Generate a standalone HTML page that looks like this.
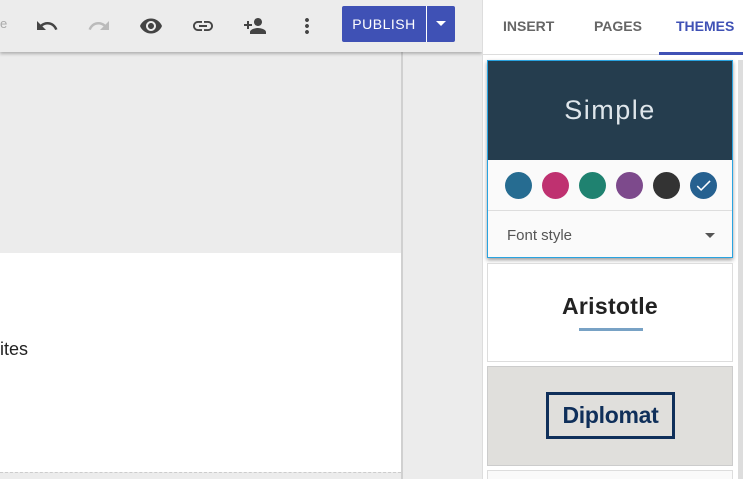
<!DOCTYPE html><html><head><style>
html,body{margin:0;width:743px;height:479px;overflow:hidden}
body{font-family:"Liberation Sans",Roboto,sans-serif;background:#ececec;position:relative}
.a{position:absolute}
.ic{position:absolute;top:14px}
</style></head><body>
<div class="a" style="left:0;top:52px;width:401px;height:201px;background:#ececec"></div>
<div class="a" style="left:0;top:253px;width:401px;height:219px;background:#fff"></div>
<div class="a" style="left:0;top:472px;width:401px;border-top:1px dashed #ccc"></div>
<div class="a" style="left:0;top:339px;font-size:18px;color:#222">ites</div>
<div class="a" style="left:401px;top:52px;width:2px;height:427px;background:#d0d0d0"></div>
<div class="a" style="left:0;top:0;width:482px;height:52px;background:#ececec;box-shadow:0 2px 3px rgba(0,0,0,.25)"></div>
<div class="a" style="left:0;top:16px;font-size:13px;color:#aaa">e</div>
<svg class="ic" style="left:35px" width="24" height="24" viewBox="0 0 24 24"><path fill="#444" d="M12.5 8c-2.650 0-5.050.99-6.900 2.600L2 7v9h9l-3.620-3.620c1.390-1.160 3.160-1.880 5.120-1.880 3.540 0 6.550 2.310 7.600 5.500l2.370-.78C21.080 11.030 17.150 8 12.500 8z"/></svg>
<svg class="ic" style="left:87px" width="24" height="24" viewBox="0 0 24 24"><path fill="#bbb" d="M18.4 10.6C16.55 8.99 14.15 8 11.5 8c-4.65 0-8.58 3.03-9.96 7.22L3.9 16c1.05-3.19 4.05-5.5 7.6-5.5 1.95 0 3.73.72 5.12 1.88L13 16h9V7z"/></svg>
<svg class="ic" style="left:139px" width="24" height="24" viewBox="0 0 24 24"><path fill="#444" d="M12 4.5C7 4.5 2.73 7.61 1 12c1.73 4.39 6 7.5 11 7.5s9.27-3.11 11-7.5c-1.730-4.390-6-7.500-11-7.500zM12 17c-2.76 0-5-2.24-5-5s2.24-5 5-5 5 2.24 5 5-2.24 5-5 5zm0-8c-1.66 0-3 1.34-3 3s1.34 3 3 3 3-1.34 3-3-1.34-3-3-3z"/></svg>
<svg class="ic" style="left:191px" width="24" height="24" viewBox="0 0 24 24"><path fill="#444" d="M3.9 12c0-1.71 1.39-3.1 3.1-3.1h4V7H7c-2.76 0-5 2.24-5 5s2.24 5 5 5h4v-1.9H7c-1.71 0-3.1-1.39-3.1-3.1zM8 13h8v-2H8v2zm9-6h-4v1.9h4c1.71 0 3.1 1.39 3.1 3.1s-1.39 3.1-3.1 3.1h-4V17h4c2.76 0 5-2.24 5-5s-2.24-5-5-5z"/></svg>
<svg class="ic" style="left:243px" width="24" height="24" viewBox="0 0 24 24"><path fill="#444" d="M15 12c2.21 0 4-1.79 4-4s-1.79-4-4-4-4 1.79-4 4 1.79 4 4 4zm-9-2V7H4v3H1v2h3v3h2v-3h3v-2H6zm9 4c-2.67 0-8 1.34-8 4v2h16v-2c0-2.66-5.33-4-8-4z"/></svg>
<svg class="ic" style="left:295px" width="24" height="24" viewBox="0 0 24 24"><path fill="#444" d="M12 8c1.1 0 2-.9 2-2s-.9-2-2-2-2 .9-2 2 .9 2 2 2zm0 2c-1.1 0-2 .9-2 2s.9 2 2 2 2-.9 2-2-.9-2-2-2zm0 6c-1.1 0-2 .9-2 2s.9 2 2 2 2-.9 2-2-.9-2-2-2z"/></svg>
<div class="a" style="left:342px;top:6px;width:113px;height:36px;background:#3f51b5;border-radius:2px"></div>
<div class="a" style="left:342px;top:6px;width:84px;height:36px;line-height:36px;text-align:center;color:#fff;font-size:14px;letter-spacing:.5px">PUBLISH</div>
<div class="a" style="left:426px;top:6px;width:1px;height:36px;background:#fff"></div>
<div class="a" style="left:436px;top:21px;border-left:5px solid transparent;border-right:5px solid transparent;border-top:5px solid #fff"></div>
<div class="a" style="left:482px;top:0;width:261px;height:479px;background:#fff;border-left:1px solid #ddd"></div>
<div class="a" style="left:482px;top:54px;width:261px;height:1px;background:#ddd"></div>
<div class="a" style="left:503px;top:18px;font-size:14px;font-weight:bold;color:#666">INSERT</div>
<div class="a" style="left:594px;top:18px;font-size:14px;font-weight:bold;color:#666">PAGES</div>
<div class="a" style="left:676px;top:18px;font-size:14px;font-weight:bold;color:#3f51b5">THEMES</div>
<div class="a" style="left:659px;top:52px;width:84px;height:3px;background:#3f51b5"></div>
<div class="a" style="left:738px;top:60px;width:5px;height:419px;background:#ddd"></div>
<div class="a" style="left:487px;top:60px;width:244px;height:196px;border:1px solid #29a3e0;background:#fafafa;box-shadow:0 2px 4px rgba(0,0,0,.4)"></div>
<div class="a" style="left:488px;top:61px;width:244px;height:99px;background:#253d4e;color:#dfe6eb;font-size:27px;text-align:center;line-height:99px;letter-spacing:1.5px">Simple</div>
<div class="a" style="left:488px;top:210px;width:244px;height:1px;background:#ddd"></div>
<div class="a" style="left:505px;top:172px;width:27px;height:27px;border-radius:50%;background:#266c91"></div>
<div class="a" style="left:542px;top:172px;width:27px;height:27px;border-radius:50%;background:#bf3170"></div>
<div class="a" style="left:579px;top:172px;width:27px;height:27px;border-radius:50%;background:#1f8270"></div>
<div class="a" style="left:616px;top:172px;width:27px;height:27px;border-radius:50%;background:#7d4a8c"></div>
<div class="a" style="left:653px;top:172px;width:27px;height:27px;border-radius:50%;background:#333"></div>
<div class="a" style="left:690px;top:172px;width:27px;height:27px;border-radius:50%;background:#266190"></div>
<svg class="a" style="left:694px;top:176px" width="19" height="19" viewBox="0 0 24 24"><path fill="#fff" d="M9 16.2L4.8 12l-1.4 1.4L9 19 21 7l-1.4-1.4z"/></svg>
<div class="a" style="left:507px;top:227px;font-size:15px;color:#555">Font style</div>
<div class="a" style="left:705px;top:233px;border-left:5px solid transparent;border-right:5px solid transparent;border-top:5px solid #555"></div>
<div class="a" style="left:487px;top:263px;width:244px;height:97px;border:1px solid #ddd;background:#fff"></div>
<div class="a" style="left:487px;top:293px;width:246px;text-align:center;font-size:23px;font-weight:bold;color:#222;letter-spacing:.3px">Aristotle</div>
<div class="a" style="left:579px;top:328px;width:64px;height:3px;background:#78a2c5"></div>
<div class="a" style="left:487px;top:366px;width:244px;height:98px;border:1px solid #ccc;background:#e0dfdc"></div>
<div class="a" style="left:546px;top:392px;width:123px;height:41px;border:3px solid #0f2f5a;color:#0f2f5a;font-size:23px;font-weight:bold;text-align:center;line-height:41px;letter-spacing:-.3px">Diplomat</div>
<div class="a" style="left:487px;top:470px;width:244px;height:10px;border:1px solid #ddd;background:#fafafa"></div>
</body></html>
